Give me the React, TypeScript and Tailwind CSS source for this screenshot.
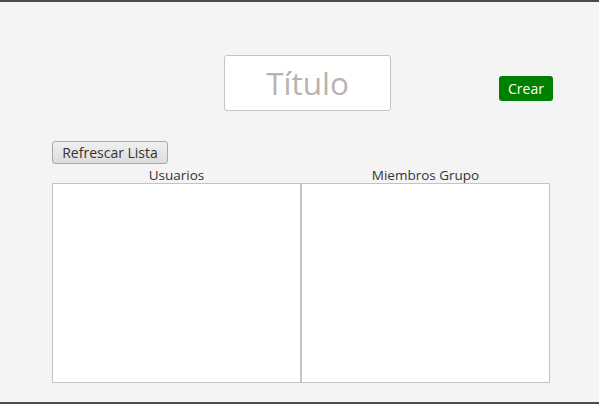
import React from "react";

export default function App() {
  const font = { fontFamily: '"Open Sans", "Noto Sans", sans-serif' };
  return (
    <div
      className="w-[599px] h-[404px] bg-[#f4f4f4] border-y-2 border-[#4a4a4a] flex flex-col overflow-hidden"
      style={font}
    >
      <div className="flex items-start pl-[224px] pt-[53px]">
        <div className="w-[167px] h-[56px] bg-white border border-[#c4c4c4] rounded-[3px] flex items-center justify-center">
          <span className="text-[31.5px] text-[#b9b3ae] leading-none">Título</span>
        </div>
        <button className="ml-[108px] mt-[21px] w-[54px] h-[25px] bg-[#008000] rounded-[3px] text-white text-[14px] leading-none flex items-center justify-center">
          Crear
        </button>
      </div>
      <div className="pl-[52px] pt-[30px]">
        <button className="w-[116px] h-[23px] rounded-[3px] border border-[#a8a8a8] bg-gradient-to-b from-[#f0f0f0] to-[#dcdcdc] text-[14px] text-[#333] leading-none flex items-center justify-center">
          Refrescar Lista
        </button>
      </div>
      <div className="flex pl-[52px] mt-[3px]">
        <div className="w-[249px] flex flex-col">
          <div className="h-[16px] text-center text-[13.5px] text-[#333] leading-[16px]">Usuarios</div>
          <div className="h-[200px] bg-white border border-[#c4c4c4]"></div>
        </div>
        <div className="w-[249px] flex flex-col">
          <div className="h-[16px] text-center text-[13.5px] text-[#333] leading-[16px]">Miembros Grupo</div>
          <div className="h-[200px] bg-white border border-[#c4c4c4]"></div>
        </div>
      </div>
    </div>
  );
}
